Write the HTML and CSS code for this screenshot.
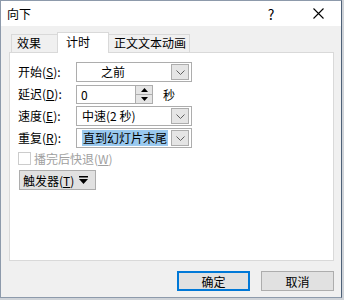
FILE: index.html
```html
<!DOCTYPE html>
<html lang="zh-CN">
<head>
    <meta charset="UTF-8">
    <link rel="stylesheet" href="styles.css">
</head>
<body>
    <div class="dialog">
        <div class="title-bar">
            <div class="title">向下</div>
            <div class="title-help">?</div>
            <div class="title-close">
                <svg width="11" height="11" viewBox="0 0 11 11"><path d="M0.5 0.5L10.5 10.5M10.5 0.5L0.5 10.5" stroke="#000" stroke-width="1.1" fill="none"/></svg>
            </div>
        </div>

        <div class="dialog-body">
            <div class="tabs">
                <div class="tab tab-1">效果</div>
                <div class="tab tab-2 active">计时</div>
                <div class="tab tab-3">正文文本动画</div>
            </div>

            <div class="tab-panel">
                <div class="form-row">
                    <div class="form-label">开始(<u>S</u>):</div>
                    <div class="combo">
                        <span class="combo-text centered">之前</span>
                        <span class="combo-button"><svg width="9" height="5" viewBox="0 0 9 5"><path d="M0.5 0.5L4.5 4.5L8.5 0.5" stroke="#606060" fill="none"/></svg></span>
                    </div>
                </div>

                <div class="form-row">
                    <div class="form-label">延迟(<u>D</u>):</div>
                    <div class="spin">
                        <span class="spin-text">0</span>
                        <span class="spin-buttons">
                            <span class="spin-up"><svg width="7" height="4" viewBox="0 0 7 4"><path d="M3.5 0L7 4H0Z" fill="#000"/></svg></span>
                            <span class="spin-down"><svg width="7" height="4" viewBox="0 0 7 4"><path d="M0 0H7L3.5 4Z" fill="#000"/></svg></span>
                        </span>
                    </div>
                    <div class="unit">秒</div>
                </div>

                <div class="form-row">
                    <div class="form-label">速度(<u>E</u>):</div>
                    <div class="combo">
                        <span class="combo-text">中速(2 秒)</span>
                        <span class="combo-button"><svg width="9" height="5" viewBox="0 0 9 5"><path d="M0.5 0.5L4.5 4.5L8.5 0.5" stroke="#606060" fill="none"/></svg></span>
                    </div>
                </div>

                <div class="form-row">
                    <div class="form-label">重复(<u>R</u>):</div>
                    <div class="combo">
                        <span class="combo-text"><span class="selected-text">直到幻灯片末尾</span></span>
                        <span class="combo-button"><svg width="9" height="5" viewBox="0 0 9 5"><path d="M0.5 0.5L4.5 4.5L8.5 0.5" stroke="#606060" fill="none"/></svg></span>
                    </div>
                </div>

                <div class="check-row">
                    <span class="checkbox"></span>
                    <span class="check-label">播完后快退(<u>W</u>)</span>
                </div>

                <div class="trigger-button">
                    <span>触发器(<u>T</u>)</span>
                    <svg width="9" height="8" viewBox="0 0 9 8"><rect x="0" y="0" width="9" height="1.5" fill="#000"/><path d="M0 3H9L4.5 8Z" fill="#000"/></svg>
                </div>
            </div>

            <div class="button-container">
                <button class="ok-button">确定</button>
                <button>取消</button>
            </div>
        </div>
    </div>
</body>
</html>
```

FILE: styles.css
```css
body {
    margin: 0;
    background-color: #cfd3d8;
    font-family: "Noto Sans CJK SC", "Liberation Sans", sans-serif;
    font-size: 12px;
    color: #000;
}

.dialog {
    width: 342px;
    height: 298px;
    box-sizing: border-box;
    border: 1px solid #8d9aab;
    border-right-color: #4e6178;
    background-color: #f0f0f0;
    overflow: hidden;
}

.title-bar {
    display: flex;
    align-items: center;
    height: 25px;
    background-color: #fff;
}

.title {
    padding-left: 6px;
    flex-grow: 1;
    font-size: 12px;
    line-height: 25px;
}

.title-help {
    font-size: 14px;
    width: 14px;
    text-align: center;
    margin-right: 35px;
}

.title-close {
    display: flex;
    margin-right: 17px;
}

.dialog-body {
    padding: 6px 7px 6px 8px;
}

.tabs {
    display: flex;
    align-items: flex-end;
    margin-left: 2px;
    height: 20px;
}

.tab {
    box-sizing: border-box;
    height: 18px;
    border: 1px solid #d9d9d9;
    border-bottom: none;
    line-height: 16px;
    padding-left: 5px;
    font-size: 12px;
}

.tab-1 {
    width: 46px;
    border-right: none;
}

.tab-2 {
    width: 52px;
}

.tab-3 {
    width: 81px;
    border-left: none;
}

.tab.active {
    height: 21px;
    margin-bottom: -1px;
    background-color: #fff;
    padding-left: 8px;
    line-height: 17px;
    position: relative;
}

.tab-panel {
    box-sizing: border-box;
    width: 325px;
    height: 209px;
    border: 1px solid #d9d9d9;
    background-color: #fff;
    padding: 9px 8px 0 8px;
}

.form-row {
    display: flex;
    align-items: center;
    height: 20px;
    margin-bottom: 2px;
}

.form-label {
    width: 58px;
    line-height: 20px;
}

.combo {
    box-sizing: border-box;
    display: flex;
    align-items: center;
    width: 116px;
    height: 20px;
    border: 1px solid #adadad;
    padding: 1px;
}

.combo-text {
    flex-grow: 1;
    padding-left: 4px;
    line-height: 16px;
    white-space: nowrap;
    overflow: hidden;
}

.combo-text.centered {
    padding-left: 23px;
}

.selected-text {
    background-color: #99c9ef;
    padding: 0 1px;
}

.combo-button {
    box-sizing: border-box;
    display: flex;
    align-items: center;
    justify-content: center;
    width: 18px;
    height: 16px;
    margin-right: 1px;
    background-color: #e5e5e5;
    border: 1px solid #adadad;
}

.spin {
    box-sizing: border-box;
    display: flex;
    width: 77px;
    height: 19px;
    border: 1px solid #adadad;
}

.spin-text {
    flex-grow: 1;
    padding-left: 4px;
    line-height: 17px;
}

.spin-buttons {
    display: flex;
    flex-direction: column;
    width: 16px;
    border-left: 1px solid #adadad;
    background-color: #e5e5e5;
}

.spin-up,
.spin-down {
    flex-grow: 1;
    display: flex;
    align-items: center;
    justify-content: center;
}

.spin-up {
    border-bottom: 1px solid #adadad;
}

.unit {
    margin-left: 10px;
}

.check-row {
    display: flex;
    align-items: center;
    height: 15px;
    margin-top: 3px;
}

.checkbox {
    box-sizing: border-box;
    width: 13px;
    height: 13px;
    border: 1px solid #cccccc;
    background-color: #fff;
    margin-right: 3px;
}

.check-label {
    color: #a0a0a0;
}

.trigger-button {
    box-sizing: border-box;
    display: flex;
    align-items: center;
    gap: 5px;
    width: 77px;
    height: 20px;
    margin-top: 4px;
    margin-left: 1px;
    padding-left: 3px;
    background-color: #e1e1e1;
    border: 1px solid #adadad;
}

.button-container {
    display: flex;
    justify-content: flex-end;
    gap: 11px;
    margin-top: 10px;
}

.button-container button {
    box-sizing: border-box;
    width: 73px;
    height: 20px;
    padding: 0;
    background-color: #e1e1e1;
    border: 1px solid #adadad;
    font-family: "Noto Sans CJK SC", "Liberation Sans", sans-serif;
    font-size: 12px;
    color: #000;
}

.button-container .ok-button {
    border: 2px solid #0078d7;
}
```
